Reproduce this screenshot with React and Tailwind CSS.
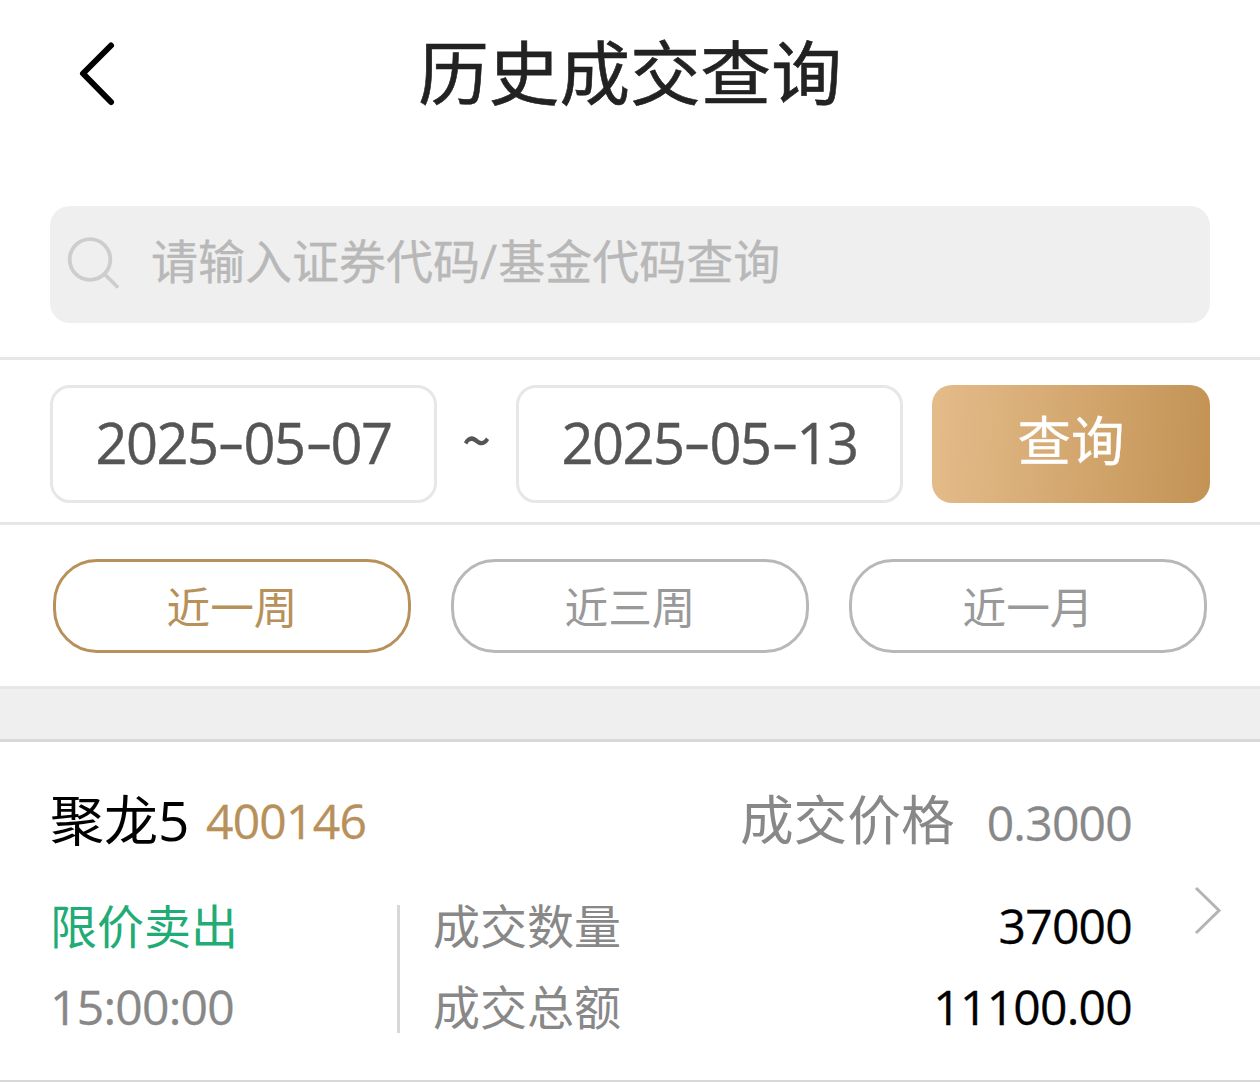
import { useState } from 'react';

const ranges = ["近一周", "近三周", "近一月"];

const records = [
  {
    name: "聚龙",
    suffix: "5",
    code: "400146",
    price: "0.3000",
    type: "限价卖出",
    time: "15:00:00",
    count: "37000",
    total: "11100.00",
  },
];

// --- Header ---
function Header() {
  return (
    <header className="grid h-[139px] grid-cols-[1fr_auto_1fr] items-center">
      <button className="mt-2 ml-[76px] w-11">
        <svg width="44" height="68" viewBox="0 0 44 68" fill="none">
          <path d="M35 5.5L7 33.5L35 62" stroke="#000" strokeWidth="6" strokeLinecap="round" strokeLinejoin="round" />
        </svg>
      </button>
      <h1 className="text-[70.6px] leading-none text-[#222] [-webkit-text-stroke:0.6px_#222]">历史成交查询</h1>
    </header>
  );
}

// --- Search bar ---
function SearchBar() {
  return (
    <div className="mx-[50px] mt-[67px] mb-[34px] flex h-[117px] items-center rounded-[20px] bg-[#efefef] pl-4">
      <svg className="-mt-1 shrink-0" width="56" height="56" viewBox="0 0 56 56" fill="none" stroke="#cdcdcd" strokeWidth="3.8" strokeLinecap="round">
        <circle cx="24" cy="24.5" r="20.3" />
        <path d="M38.5 39L51 51.5" />
      </svg>
      <span className="-mt-[9px] ml-[29px] text-[47px] leading-none whitespace-nowrap text-[#b8b8b8] [-webkit-text-stroke:0.3px_#b8b8b8]">
        请输入证券代码<span className="pr-px font-['Open_Sans']">/</span>基金代码查询
      </span>
    </div>
  );
}

function DateBox({ value }) {
  const parts = value.split("-");
  return (
    <div className="flex h-[118px] w-[387px] items-center justify-center rounded-[20px] border-[3px] border-[#e7e7e7] pb-[5px] font-['Open_Sans'] text-[56px] leading-none tracking-[-1.5px] text-[#555] [-webkit-text-stroke:0.4px_#555]">
      {parts.map((part, i) => (
        <span key={i} className="flex">
          {i > 0 && <span className="w-[26px] -translate-y-0.5 scale-x-150 text-center">-</span>}
          {part}
        </span>
      ))}
    </div>
  );
}

// --- Date filter ---
function DateFilter() {
  return (
    <div className="flex h-[168px] items-center border-y-[3px] border-[#e7e7e7] px-[50px] pt-1.5">
      <DateBox value="2025-05-07" />
      <span className="w-[79px] pb-3 text-center text-[51px] leading-none font-medium text-[#555]">~</span>
      <DateBox value="2025-05-13" />
      <button className="ml-[29px] h-[118px] w-[278px] rounded-[20px] bg-linear-[94deg] from-[#e4bc8a] to-[#c39355] pb-3 text-[53.5px] leading-none text-white [-webkit-text-stroke:0.3px_#fff]">
        查询
      </button>
    </div>
  );
}

// --- Quick range chips ---
function RangeChips() {
  const [active, setActive] = useState("近一周");

  return (
    <div className="flex gap-10 px-[53px] pt-[34px] pb-[33px]">
      {ranges.map((range) => (
        <button
          key={range}
          onClick={() => setActive(range)}
          className={`h-[94px] w-[358px] rounded-[44px] border-[3px] text-[43.7px] leading-none ${
            active === range ? "border-[#b8905a] text-[#b8905a]" : "border-[#b8b8b8] text-[#999]"
          }`}
        >
          {range}
        </button>
      ))}
    </div>
  );
}

// --- Numbers in a record ---
function Num({ className, children }) {
  return (
    <span className={`font-['Open_Sans'] text-[48px] tracking-[-0.75px] [-webkit-text-stroke:0.3px_currentColor] ${className}`}>
      {children}
    </span>
  );
}

// --- One record ---
function RecordItem({ item }) {
  return (
    <div className="flex h-[340px] border-b-2 border-[#d8d8d8] pt-[45px] pl-[50px]">
      <div className="w-[1082px]">
        <div className="flex h-[60px] items-center leading-none">
          <span className="mt-[3px] text-[54px] text-black">
            {item.name}<span className="font-['Open_Sans'] text-[55px] tracking-[-2.5px]">{item.suffix}</span>
          </span>
          <Num className="mt-[8px] ml-[19px] text-[#b8905a]">{item.code}</Num>
          <span className="-mt-px ml-auto text-[53.7px] text-[#888]">成交价格</span>
          <Num className="mt-[11px] ml-[32px] text-[#888]">{item.price}</Num>
        </div>

        <div className="mt-9 flex">
          <div className="w-[347px]">
            <p className="h-[81px] text-[47px] leading-[81px] text-[#22ac75]">{item.type}</p>
            <p className="h-[81px] leading-[86px]"><Num className="text-[#888]">{item.time}</Num></p>
          </div>
          <div className="mt-[22px] h-32 w-[3px] bg-[#d8d8d8]" />
          <div className="flex-1 pl-[33px]">
            <p className="flex h-[81px] justify-between text-[47px] leading-[81px] text-[#888]">
              成交数量<Num className="leading-[86px] text-black">{item.count}</Num>
            </p>
            <p className="flex h-[81px] justify-between text-[47px] leading-[81px] text-[#888]">
              成交总额<Num className="leading-[86px] text-black">{item.total}</Num>
            </p>
          </div>
        </div>
      </div>

      <svg className="mt-[97px] ml-[60px]" width="32" height="52" viewBox="0 0 32 52" fill="none">
        <path d="M4 4L27 26.5L4 49" stroke="#b4b4b4" strokeWidth="3" />
      </svg>
    </div>
  );
}

function App() {
  return (
    <div className="h-[1082px] w-[1260px] overflow-hidden bg-white font-['Noto_Sans_CJK_SC',sans-serif]">
      <Header />
      <SearchBar />
      <DateFilter />
      <RangeChips />
      <div className="h-14 border-t-[3px] border-b-[3px] border-t-[#e7e7e7] border-b-[#d8d8d8] bg-[#efefef]" />
      {records.map((item) => (
        <RecordItem key={item.code} item={item} />
      ))}
    </div>
  );
}

export default App;
